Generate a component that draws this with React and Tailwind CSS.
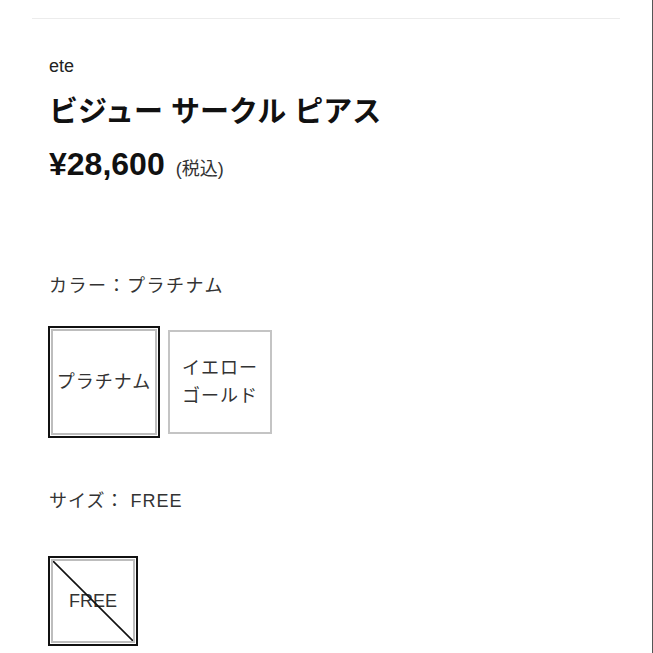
export default function App() {
  return (
    <div className="w-[653px] h-[653px] bg-white overflow-hidden border-r border-[#555] font-['Liberation_Sans','Noto_Sans_CJK_JP',sans-serif] text-[#222]">
      <div className="mx-8 pt-[18px]">
        <div className="h-px bg-[#ececec]" />
      </div>

      <div className="pl-[49px]">
        <p className="mt-[35px] text-[18px] leading-[24px] text-[#222]">ete</p>
        <h1 className="mt-[16px] text-[29px] font-bold leading-[36px] text-[#111]">
          ビジュー サークル ピアス
        </h1>
        <div className="mt-[16px] flex items-baseline gap-[11px] leading-[36px] text-[#111]">
          <span className="text-[32px] font-bold">¥28,600</span>
          <span className="text-[18px] text-[#333]">(税込)</span>
        </div>

        <p className="mt-[86px] text-[18px] leading-[26px] tracking-[1.5px] text-[#333]">
          カラー：プラチナム
        </p>

        <div className="mt-[30px] ml-[2px] flex items-center gap-[11px]">
          <button className="w-[106px] h-[106px] border-2 border-[#bdbdbd] outline-2 outline-offset-1 outline-[#111] flex items-center justify-center text-[18px] tracking-[1px] text-[#333]">
            プラチナム
          </button>
          <button className="w-[104px] h-[104px] border-2 border-[#c4c4c4] flex flex-col items-center justify-center text-[18px] leading-[28px] tracking-[1px] text-[#333]">
            <span>イエロー</span>
            <span>ゴールド</span>
          </button>
        </div>

        <p className="mt-[53px] text-[18px] leading-[26px] tracking-[1px] text-[#333]">
          サイズ： FREE
        </p>

        <div className="mt-[45px] ml-[2px] flex">
          <button className="relative w-[84px] h-[84px] border-2 border-[#bdbdbd] outline-2 outline-offset-1 outline-[#111] flex items-center justify-center text-[18px] text-[#333]">
            FREE
            <svg className="absolute inset-0 w-full h-full" viewBox="0 0 80 80" preserveAspectRatio="none">
              <line x1="0" y1="0" x2="80" y2="80" stroke="#111" strokeWidth="1.6" />
            </svg>
          </button>
        </div>
      </div>
    </div>
  );
}
